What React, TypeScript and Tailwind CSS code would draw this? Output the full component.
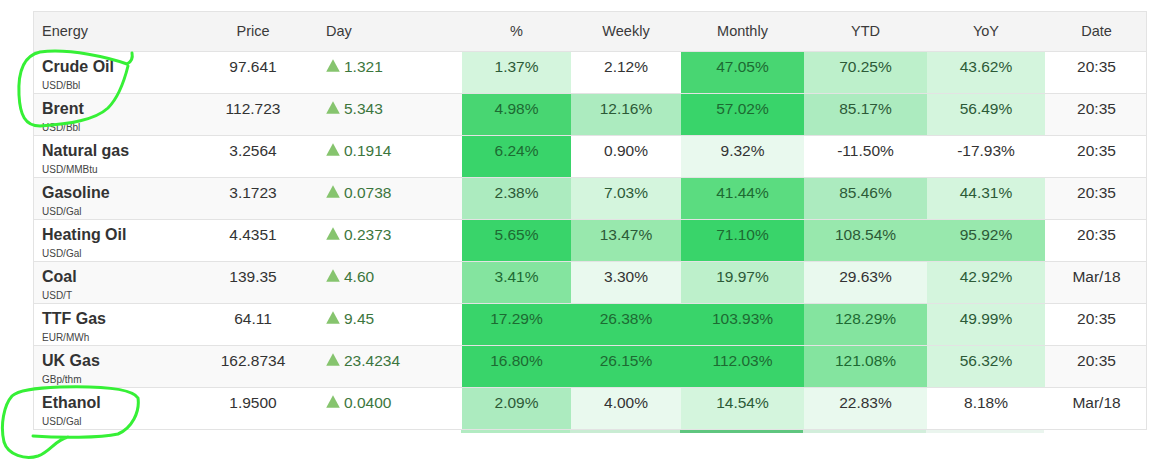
import React from "react";

type Row = {
  name: string;
  unit: string;
  price: string;
  day: string;
  cells: [string, number][];
  date: string;
};

// heat levels: 0 = none … 9 = strongest green
const heat: Record<number, string> = {
  0: "",
  1: "bg-[#e9f9ee]",
  2: "bg-[#d4f5dd]",
  3: "bg-[#bdf0cb]",
  4: "bg-[#acebbf]",
  5: "bg-[#98e8ad]",
  6: "bg-[#84e49f]",
  7: "bg-[#5bdc80]",
  8: "bg-[#48d672]",
  9: "bg-[#39d46a]",
};

function ink(level: number) {
  if (level >= 6) return "text-[#1d6a32]";
  if (level >= 2) return "text-[#2c5a37]";
  return "text-[#333]";
}

const rows: Row[] = [
  { name: "Crude Oil", unit: "USD/Bbl", price: "97.641", day: "1.321", date: "20:35",
    cells: [["1.37%", 2], ["2.12%", 0], ["47.05%", 8], ["70.25%", 3], ["43.62%", 2]] },
  { name: "Brent", unit: "USD/Bbl", price: "112.723", day: "5.343", date: "20:35",
    cells: [["4.98%", 8], ["12.16%", 4], ["57.02%", 9], ["85.17%", 4], ["56.49%", 2]] },
  { name: "Natural gas", unit: "USD/MMBtu", price: "3.2564", day: "0.1914", date: "20:35",
    cells: [["6.24%", 9], ["0.90%", 0], ["9.32%", 1], ["-11.50%", 0], ["-17.93%", 0]] },
  { name: "Gasoline", unit: "USD/Gal", price: "3.1723", day: "0.0738", date: "20:35",
    cells: [["2.38%", 4], ["7.03%", 2], ["41.44%", 7], ["85.46%", 4], ["44.31%", 2]] },
  { name: "Heating Oil", unit: "USD/Gal", price: "4.4351", day: "0.2373", date: "20:35",
    cells: [["5.65%", 9], ["13.47%", 5], ["71.10%", 9], ["108.54%", 5], ["95.92%", 5]] },
  { name: "Coal", unit: "USD/T", price: "139.35", day: "4.60", date: "Mar/18",
    cells: [["3.41%", 6], ["3.30%", 1], ["19.97%", 3], ["29.63%", 1], ["42.92%", 2]] },
  { name: "TTF Gas", unit: "EUR/MWh", price: "64.11", day: "9.45", date: "20:35",
    cells: [["17.29%", 9], ["26.38%", 9], ["103.93%", 9], ["128.29%", 6], ["49.99%", 2]] },
  { name: "UK Gas", unit: "GBp/thm", price: "162.8734", day: "23.4234", date: "20:35",
    cells: [["16.80%", 9], ["26.15%", 9], ["112.03%", 9], ["121.08%", 6], ["56.32%", 2]] },
  { name: "Ethanol", unit: "USD/Gal", price: "1.9500", day: "0.0400", date: "Mar/18",
    cells: [["2.09%", 4], ["4.00%", 1], ["14.54%", 2], ["22.83%", 1], ["8.18%", 0]] },
];

const cols = "grid grid-cols-[154px_130px_144px_109px_110px_123px_123px_118px_103px]";

function UpArrow() {
  return (
    <svg width="14" height="13" viewBox="0 0 14 13" className="block shrink-0">
      <path d="M7 0.3 L13.8 12.8 L0.2 12.8 Z" fill="#86c46e" />
    </svg>
  );
}

export default function App() {
  return (
    <div className="relative w-[1154px] h-[460px] bg-white pt-[11px] pl-[33px] font-['Liberation_Sans',Arial,sans-serif] text-[#333]">
      <div className="w-[1114px] border border-[#e3e3e3]">
        <div className={`${cols} h-[39px] bg-[#f4f4f4] text-[14.5px] text-[#3a3a3a] items-center`}>
          <div className="pl-[8px]">Energy</div>
          <div className="text-center">Price</div>
          <div className="pl-[8px]">Day</div>
          <div className="text-center">%</div>
          <div className="text-center">Weekly</div>
          <div className="text-center">Monthly</div>
          <div className="text-center">YTD</div>
          <div className="text-center">YoY</div>
          <div className="text-center">Date</div>
        </div>

        {rows.map((r, i) => (
          <div
            key={r.name}
            className={`${cols} h-[42px] border-t border-[#e3e3e3] ${i % 2 === 1 ? "bg-[#f9f9f9]" : "bg-white"}`}
          >
            <div className="pl-[8px] pt-[5px]">
              <div className="text-[16px] leading-[20px] font-bold text-[#333]">{r.name}</div>
              <div className="mt-[3px] text-[10px] leading-[12px] text-[#444]">{r.unit}</div>
            </div>
            <div className="pt-[5px] text-center text-[15.5px] leading-[20px]">{r.price}</div>
            <div className="pl-[8px] pt-[5px] flex items-start gap-[4px] text-[15.5px] leading-[20px] text-[#3c763d]">
              <span className="mt-[2px]"><UpArrow /></span>
              <span>{r.day}</span>
            </div>
            {r.cells.map(([v, lvl], j) => (
              <div
                key={j}
                className={`pt-[5px] text-center text-[15.5px] leading-[20px] ${heat[lvl]} ${ink(lvl)}`}
              >
                {v}
              </div>
            ))}
            <div className="pt-[5px] text-center text-[15.5px] leading-[20px]">{r.date}</div>
          </div>
        ))}
      </div>

      {/* next row peeking under the table edge */}
      <div className={`${cols} w-[1114px] h-[3px]`}>
        <div />
        <div />
        <div />
        <div className="bg-[#b2ebc2]" />
        <div className="bg-[#c9ecd3]" />
        <div className="bg-[#5fc67f]" />
        <div className="bg-[#d2eedb]" />
        <div className="bg-[#eaf5ee]" />
        <div />
      </div>

      {/* marker scribbles */}
      <svg
        width="1154"
        height="460"
        className="absolute left-0 top-0 pointer-events-none"
        fill="none"
        stroke="#36f036"
        strokeWidth="3"
        strokeLinecap="round"
        strokeLinejoin="round"
      >
        <path d="M132 53 C133 58 131 62 127 64 C110 58 70 48 40 52 C22 56 18 75 19 95 C20 115 25 126 40 126 C70 124 95 120 108 108 C118 98 124 82 128 66" />
        <path d="M33 436 C60 438 100 438 118 434 C132 428 140 412 138 398 C132 388 100 386 60 387 C35 388 18 390 12 396 C4 405 0 425 4 442 C8 455 25 460 38 456 C50 452 55 440 68 437" />
      </svg>
    </div>
  );
}
